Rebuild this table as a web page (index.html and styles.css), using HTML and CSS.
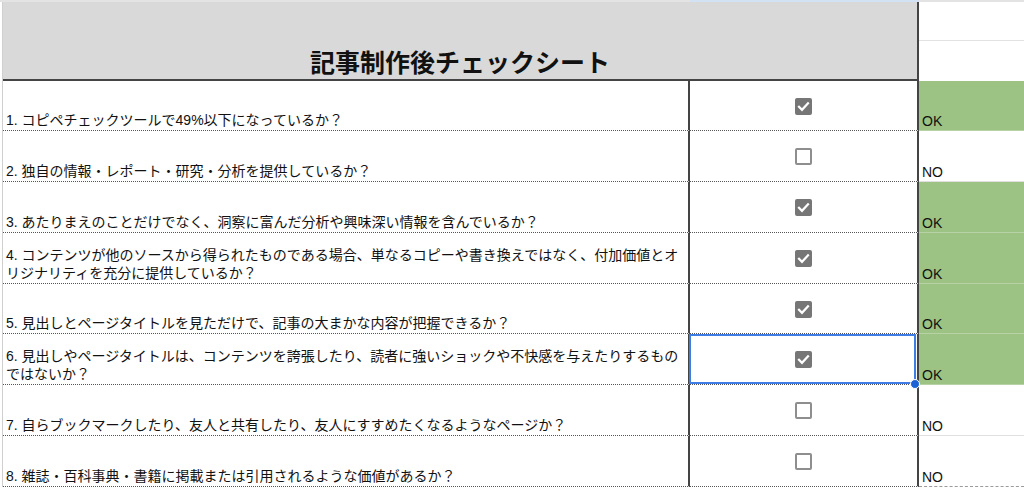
FILE: index.html
```html
<!DOCTYPE html>
<html lang="ja">
<head>
<meta charset="utf-8">
<title>記事制作後チェックシート</title>
<link rel="stylesheet" href="styles.css">
</head>
<body>
<div class="topbar"><span class="tb-a"></span><span class="tb-b"></span><span class="tb-c"></span></div>
<div class="sheet">
  <div class="title">記事制作後チェックシート</div>
  <div class="c-head"></div>
  <div class="c-head last"></div>

  <div class="q">1. コピペチェックツールで49%以下になっているか？</div>
  <div class="chk"><span class="box on"><svg viewBox="0 0 17 17"><path d="M4 8.8l3 3 6-6.4"/></svg></span></div>
  <div class="res ok">OK</div>

  <div class="q">2. 独自の情報・レポート・研究・分析を提供しているか？</div>
  <div class="chk"><span class="box"></span></div>
  <div class="res">NO</div>

  <div class="q">3. あたりまえのことだけでなく、洞察に富んだ分析や興味深い情報を含んでいるか？</div>
  <div class="chk"><span class="box on"><svg viewBox="0 0 17 17"><path d="M4 8.8l3 3 6-6.4"/></svg></span></div>
  <div class="res ok">OK</div>

  <div class="q">4. コンテンツが他のソースから得られたものである場合、単なるコピーや書き換えではなく、付加価値とオリジナリティを充分に提供しているか？</div>
  <div class="chk"><span class="box on"><svg viewBox="0 0 17 17"><path d="M4 8.8l3 3 6-6.4"/></svg></span></div>
  <div class="res ok">OK</div>

  <div class="q">5. 見出しとページタイトルを見ただけで、記事の大まかな内容が把握できるか？</div>
  <div class="chk"><span class="box on"><svg viewBox="0 0 17 17"><path d="M4 8.8l3 3 6-6.4"/></svg></span></div>
  <div class="res ok">OK</div>

  <div class="q">6. 見出しやページタイトルは、コンテンツを誇張したり、読者に強いショックや不快感を与えたりするものではないか？</div>
  <div class="chk sel"><span class="box on"><svg viewBox="0 0 17 17"><path d="M4 8.8l3 3 6-6.4"/></svg></span><span class="handle"></span></div>
  <div class="res ok">OK</div>

  <div class="q">7. 自らブックマークしたり、友人と共有したり、友人にすすめたくなるようなページか？</div>
  <div class="chk"><span class="box"></span></div>
  <div class="res">NO</div>

  <div class="q end">8. 雑誌・百科事典・書籍に掲載または引用されるような価値があるか？</div>
  <div class="chk end"><span class="box"></span></div>
  <div class="res end">NO</div>
</div>
</body>
</html>
```

FILE: styles.css
```css
html, body {
  margin: 0;
  padding: 0;
  background: #ffffff;
}
body {
  width: 1024px;
  height: 488px;
  overflow: hidden;
  font-family: "Liberation Sans", "Noto Sans CJK JP", sans-serif;
  color: #000;
}
.topbar {
  display: grid;
  grid-template-columns: 690px 229px 1fr;
  height: 2px;
  background: #e3e3e3;
}
.topbar .tb-b {
  background: #d3e1f5;
}
.sheet {
  display: grid;
  grid-template-columns: 687px 229px 1fr;
  grid-template-rows: 39px 40px 50px 51px 51px 51px 50px 51px 51px 51px;
  margin-left: 2px;
  border-left: 1px solid #cfcfcf;
}
.sheet > div {
  box-sizing: border-box;
  min-width: 0;
}
.title {
  grid-column: 1 / 3;
  grid-row: 1 / 3;
  background: #d9d9d9;
  border-right: 2px solid #444;
  border-bottom: 2px solid #444;
  display: flex;
  align-items: flex-end;
  justify-content: center;
  font-weight: bold;
  font-size: 25px;
  line-height: 28px;
  padding-bottom: 2px;
  color: #111;
}
.c-head {
  border-bottom: 1px solid #e2e2e2;
}
.c-head.last {
  border-bottom: none;
}
.q {
  display: flex;
  align-items: flex-end;
  padding: 0 3px 1px 3px;
  font-size: 14px;
  line-height: 18px;
  border-right: 2px solid #444;
  border-bottom: 1px dotted #555;
  color: #111;
}
.chk {
  display: flex;
  align-items: center;
  justify-content: center;
  border-right: 2px solid #444;
  border-bottom: 1px dotted #555;
  position: relative;
}
.res {
  display: flex;
  align-items: flex-end;
  padding: 0 3px 1px 3px;
  font-size: 14px;
  line-height: 16px;
  border-bottom: 1px solid #e0e0e0;
  color: #111;
}
.res.ok {
  background: #9cc383;
  border-bottom-color: #b7d3a5;
}
.res.end {
  border-bottom: 1px dashed #9a9a9a;
}
.box {
  display: block;
  width: 17px;
  height: 17px;
  box-sizing: border-box;
  border: 2px solid #8e8e8e;
  border-radius: 2px;
  background: #fff;
  margin-top: 1px;
}
.box.on {
  border: none;
  background: #767676;
}
.box svg {
  display: block;
  width: 17px;
  height: 17px;
}
.box svg path {
  fill: none;
  stroke: #fff;
  stroke-width: 2.2;
  stroke-linecap: square;
  stroke-linejoin: miter;
}
.chk.sel::after {
  content: "";
  position: absolute;
  left: -1px;
  top: 0;
  right: 1px;
  bottom: 0;
  border: 2px solid #3f7de6;
  pointer-events: none;
}
.handle {
  position: absolute;
  right: -3px;
  bottom: -5px;
  width: 8px;
  height: 8px;
  border-radius: 50%;
  background: #1a62d6;
  border: 1px solid #fff;
  z-index: 2;
}
```
